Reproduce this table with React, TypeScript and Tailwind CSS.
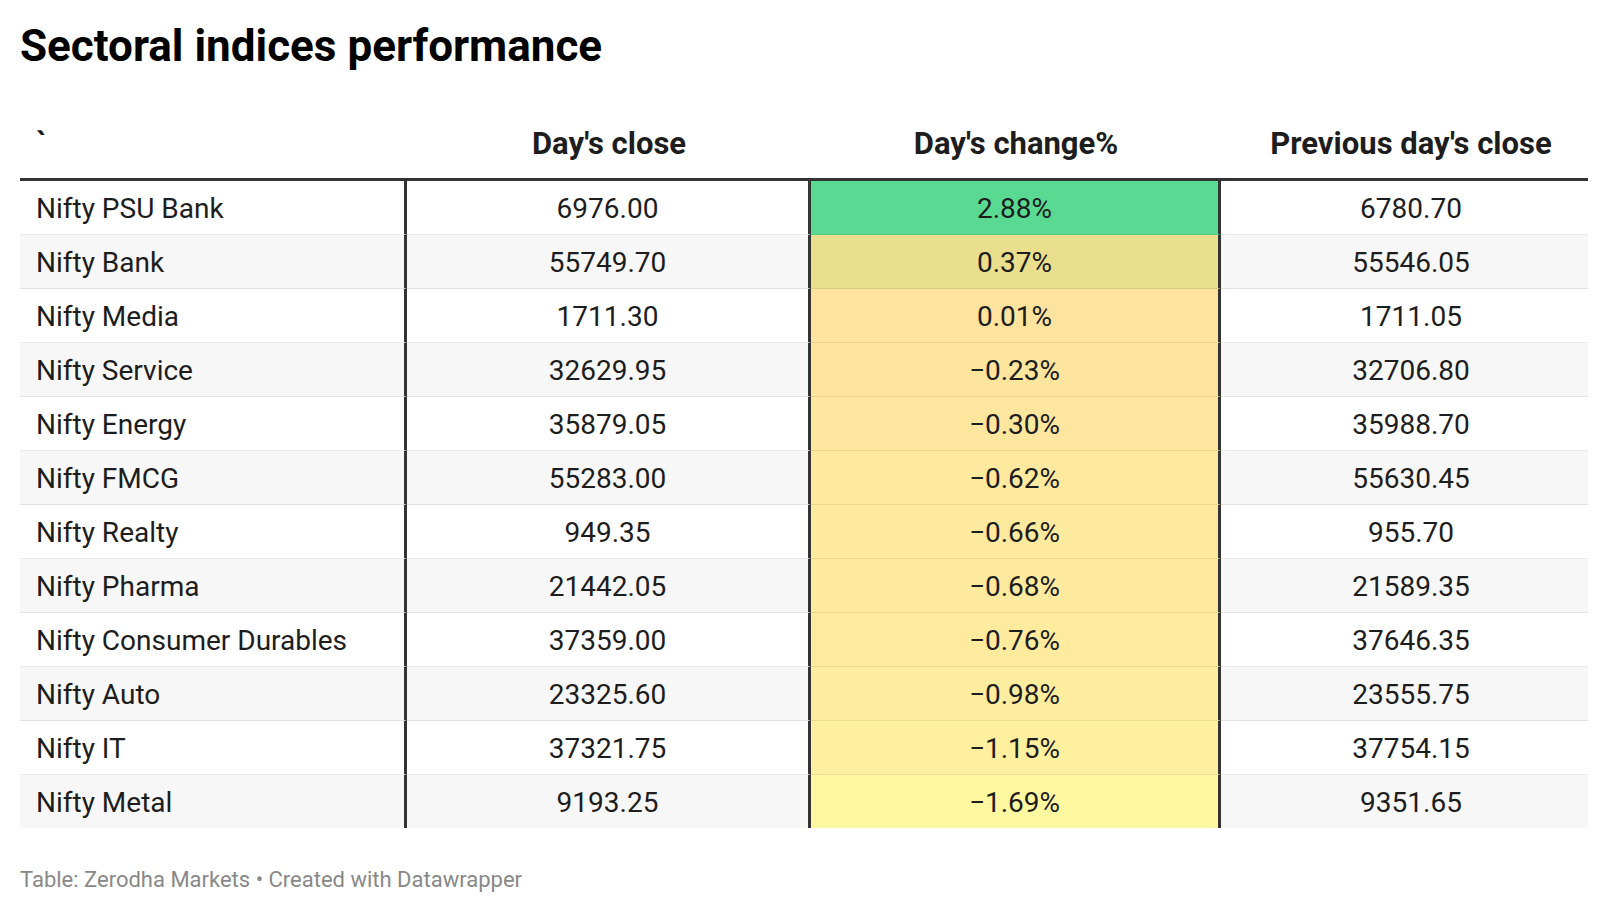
const rows = [
  { name: "Nifty PSU Bank", close: "6976.00", change: "2.88%", prev: "6780.70", bg: "bg-[#5ad993]" },
  { name: "Nifty Bank", close: "55749.70", change: "0.37%", prev: "55546.05", bg: "bg-[#eadf8d]" },
  { name: "Nifty Media", close: "1711.30", change: "0.01%", prev: "1711.05", bg: "bg-[#fde39d]" },
  { name: "Nifty Service", close: "32629.95", change: "\u22120.23%", prev: "32706.80", bg: "bg-[#fde59d]" },
  { name: "Nifty Energy", close: "35879.05", change: "\u22120.30%", prev: "35988.70", bg: "bg-[#fee69e]" },
  { name: "Nifty FMCG", close: "55283.00", change: "\u22120.62%", prev: "55630.45", bg: "bg-[#fee99e]" },
  { name: "Nifty Realty", close: "949.35", change: "\u22120.66%", prev: "955.70", bg: "bg-[#feea9e]" },
  { name: "Nifty Pharma", close: "21442.05", change: "\u22120.68%", prev: "21589.35", bg: "bg-[#feea9e]" },
  { name: "Nifty Consumer Durables", close: "37359.00", change: "\u22120.76%", prev: "37646.35", bg: "bg-[#feeb9e]" },
  { name: "Nifty Auto", close: "23325.60", change: "\u22120.98%", prev: "23555.75", bg: "bg-[#ffed9f]" },
  { name: "Nifty IT", close: "37321.75", change: "\u22121.15%", prev: "37754.15", bg: "bg-[#ffef9f]" },
  { name: "Nifty Metal", close: "9193.25", change: "\u22121.69%", prev: "9351.65", bg: "bg-[#fff8a0]" },
];

export default function App() {
  return (
    <div className="min-h-[914px] w-full bg-white px-5 pt-5 text-[#1d1d1d] font-['Roboto','Liberation_Sans',sans-serif]">
      <h1 className="text-[44px] font-bold leading-[52px] text-black">Sectoral indices performance</h1>

      {/* Table */}
      <div className="grid grid-cols-[387px_404px_410px_367px]">
        {/* Header */}
        <div className="col-span-4 grid h-[109px] grid-cols-[387px_404px_410px_367px] items-end border-b-[3px] border-[#333] pb-[16px] text-[31px] font-bold leading-[36px] text-[#1d1d1d]">
          <div className="pl-4">`</div>
          <div className="text-center">Day's close</div>
          <div className="text-center">Day's change%</div>
          <div className="pl-[13px] text-center">Previous day's close</div>
        </div>

        {rows.map((r, i) => {
          const last = i === rows.length - 1;
          const stripe = i % 2 === 1 ? "bg-[#f7f7f7]" : "bg-white";
          const sep = last ? "h-[53px]" : "h-[54px] border-b border-b-black/[0.08]";
          return (
            <div key={r.name} className="col-span-4 grid grid-cols-[387px_404px_410px_367px] text-[28px] leading-[32px]">
              <div className={`flex items-center pl-4 pt-[2px] ${stripe} ${sep} border-r-[3px] border-r-[#333]`}>{r.name}</div>
              <div className={`flex items-center justify-center pt-[2px] ${stripe} ${sep} border-r-[3px] border-r-[#333]`}>{r.close}</div>
              <div className={`flex items-center justify-center pt-[2px] ${r.bg} ${sep} border-r-[3px] border-r-[#333]`}>{r.change}</div>
              <div className={`flex items-center justify-center pl-[13px] pt-[2px] ${stripe} ${sep}`}>{r.prev}</div>
            </div>
          );
        })}
      </div>

      <p className="mt-[39px] text-[22px] leading-[26px] text-[#888]">Table: Zerodha Markets • Created with Datawrapper</p>
    </div>
  );
}
